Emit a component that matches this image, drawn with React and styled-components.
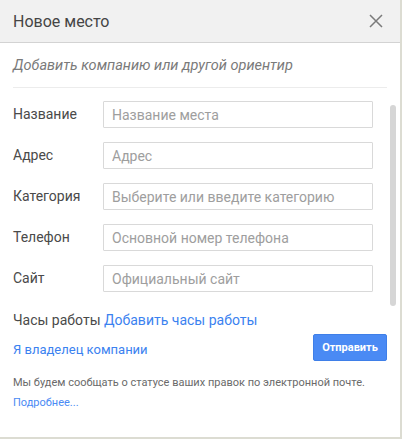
import React from "react";
import styled, { createGlobalStyle } from "styled-components";

const GlobalStyle = createGlobalStyle`
  html, body {
    margin: 0;
    padding: 0;
    background: #dcdcd2;
  }
  body {
    font-family: Roboto, "Noto Sans", Arial, sans-serif;
  }
`;

// Dialog shell
const Dialog = styled.div`
  position: relative;
  width: 400px;
  height: 437px;
  background: #fff;
  box-sizing: border-box;
  overflow: hidden;
`;

const Header = styled.div`
  display: flex;
  align-items: center;
  justify-content: space-between;
  height: 42px;
  padding: 0 13px;
  background: #f1f1f1;
  border-bottom: 1px solid #d3d3d3;
`;

const Title = styled.h1`
  margin: 0;
  font-size: 16px;
  font-weight: 400;
  color: #454545;
`;

const CloseButton = styled.button`
  display: flex;
  align-items: center;
  justify-content: center;
  width: 18px;
  height: 18px;
  padding: 0;
  margin-right: 2px;
  border: 0;
  background: none;
  cursor: pointer;
`;

const Body = styled.div`
  padding: 0 13px;
`;

const Subtitle = styled.p`
  margin: 0;
  padding: 13px 0 11px;
  font-size: 14.5px;
  line-height: 20px;
  font-style: italic;
  color: #7a7a7a;
  border-bottom: 1px solid #ececec;
`;

const Form = styled.div`
  display: grid;
  grid-template-columns: 90px 270px;
  grid-auto-rows: 27px;
  row-gap: 14px;
  padding-top: 13px;
`;

const Label = styled.label`
  align-self: center;
  font-size: 14px;
  color: #4a4a4a;
  margin-top: -2px;
`;

const Field = styled.input`
  box-sizing: border-box;
  width: 100%;
  height: 27px;
  padding: 0 8px;
  border: 1px solid #d9d9d9;
  border-radius: 1px;
  font-family: inherit;
  font-size: 14px;
  color: #333;
  outline: none;

  &::placeholder {
    color: #9e9e9e;
  }
`;

const Hours = styled.div`
  margin-top: 18px;
  font-size: 14px;
  line-height: 20px;
  color: #4a4a4a;
`;

const Link = styled.a`
  color: ${(p) => (p.$small ? "#4a8af4" : "#3b82f0")};
  font-size: ${(p) => (p.$small ? "11px" : "inherit")};
  text-decoration: none;
  cursor: pointer;
`;

const OwnerRow = styled.div`
  display: flex;
  align-items: center;
  justify-content: space-between;
  margin-top: 4px;
`;

const OwnerLink = styled(Link)`
  font-size: 13px;
  margin-top: 3px;
`;

const SubmitButton = styled.button`
  box-sizing: border-box;
  width: 74px;
  height: 27px;
  border: 1px solid #3f7fe8;
  border-radius: 2px;
  background: #4a8af4;
  color: #fff;
  font-family: inherit;
  font-size: 11px;
  font-weight: 700;
  cursor: pointer;
`;

const Note = styled.p`
  margin: 12px 0 0;
  font-size: 11px;
  line-height: 20px;
  color: #6a6a6a;
`;

// overlay scrollbar thumb of the form area
const ScrollThumb = styled.div`
  position: absolute;
  left: 390px;
  top: 105px;
  width: 6px;
  height: 201px;
  border-radius: 3px;
  background: #d6d6d6;
`;

const fields = [
  { label: "Название", placeholder: "Название места" },
  { label: "Адрес", placeholder: "Адрес" },
  { label: "Категория", placeholder: "Выберите или введите категорию" },
  { label: "Телефон", placeholder: "Основной номер телефона" },
  { label: "Сайт", placeholder: "Официальный сайт" },
];

export default function App() {
  return (
    <>
      <GlobalStyle />
      <Dialog>
        <Header>
          <Title>Новое место</Title>
          <CloseButton aria-label="Закрыть">
            <svg width="14" height="14" viewBox="0 0 14 14">
              <path d="M1 1L13 13M13 1L1 13" stroke="#7a7a7a" strokeWidth="1.5" />
            </svg>
          </CloseButton>
        </Header>
        <Body>
          <Subtitle>Добавить компанию или другой ориентир</Subtitle>
          <Form>
            {fields.map((f) => (
              <React.Fragment key={f.label}>
                <Label>{f.label}</Label>
                <Field placeholder={f.placeholder} />
              </React.Fragment>
            ))}
          </Form>
          <Hours>
            Часы работы <Link>Добавить часы работы</Link>
          </Hours>
          <OwnerRow>
            <OwnerLink>Я владелец компании</OwnerLink>
            <SubmitButton>Отправить</SubmitButton>
          </OwnerRow>
          <Note>
            Мы будем сообщать о статусе ваших правок по электронной почте.
            <br />
            <Link $small>Подробнее...</Link>
          </Note>
        </Body>
        <ScrollThumb />
      </Dialog>
    </>
  );
}
